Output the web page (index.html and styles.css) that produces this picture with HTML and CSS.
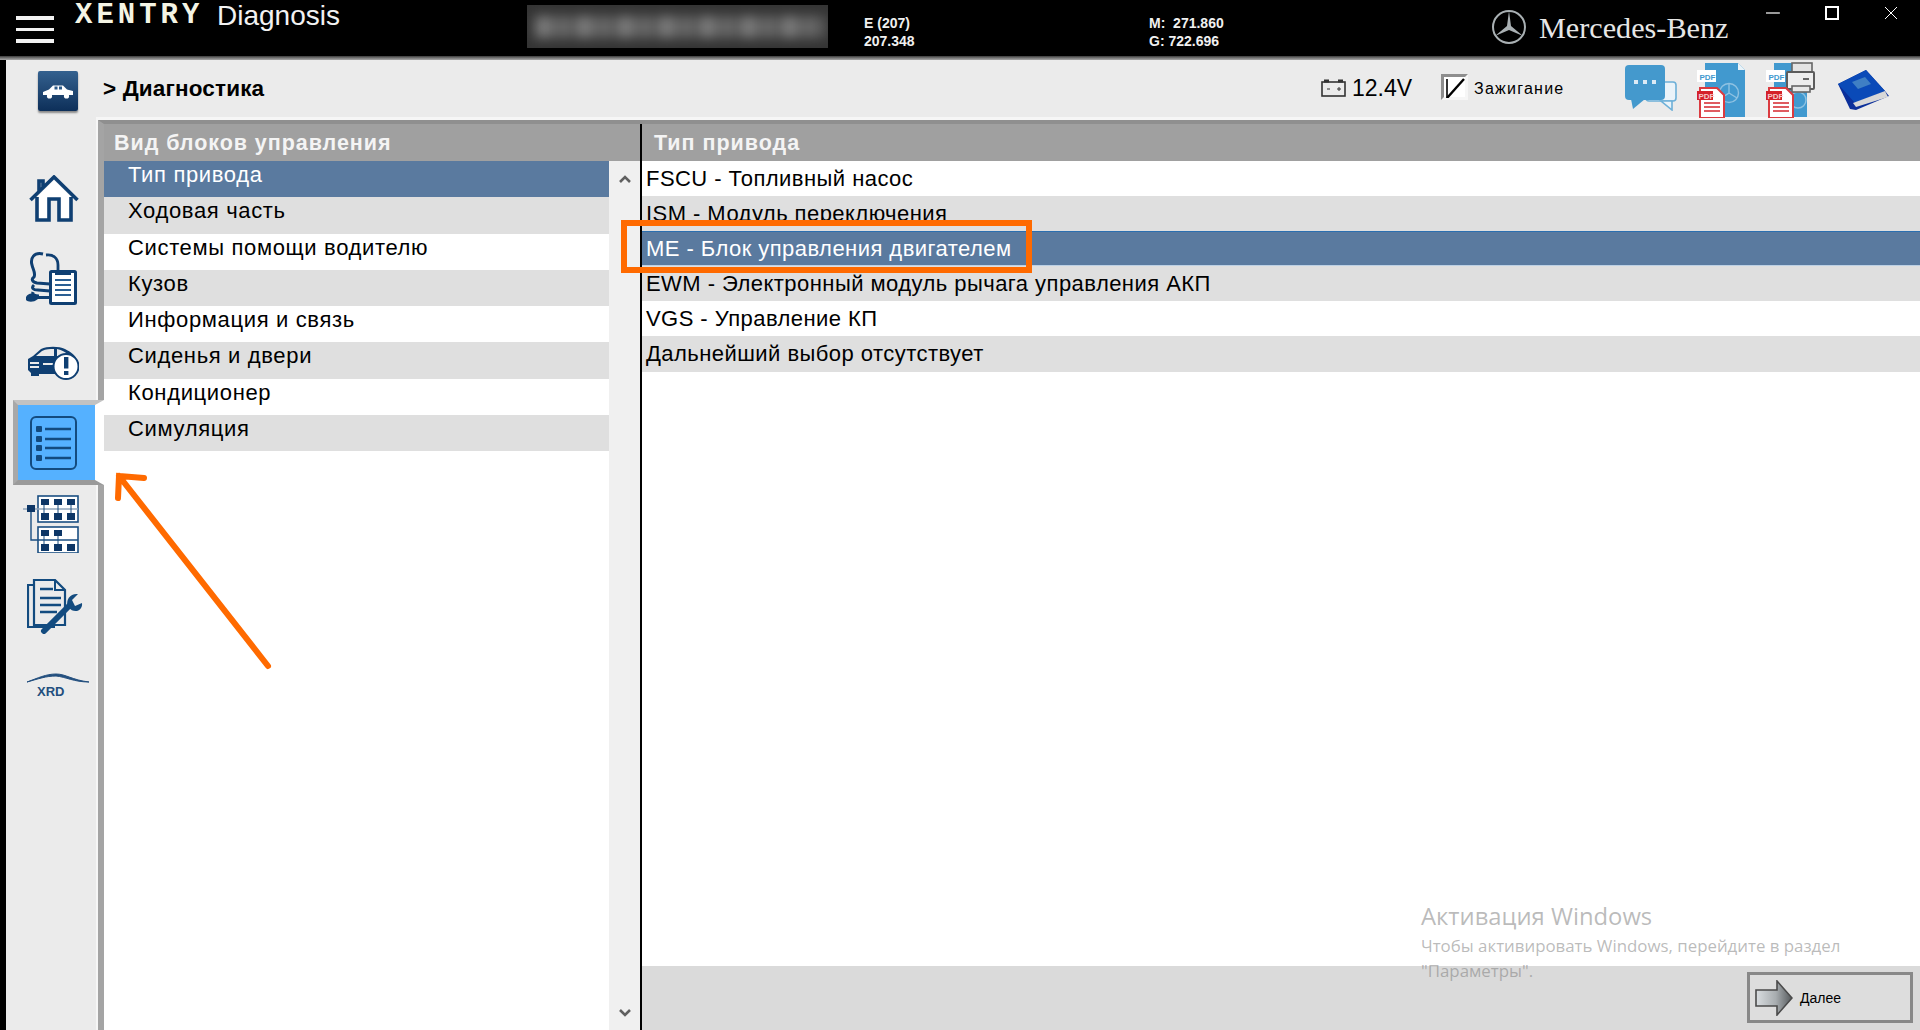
FILE: index.html
```html
<!DOCTYPE html>
<html lang="ru">
<head>
<meta charset="utf-8">
<title>XENTRY Diagnosis</title>
<link rel="stylesheet" href="styles.css">
</head>
<body>
<div class="app">
  <header class="topbar">
    <div class="burger"><i></i><i></i><i></i></div>
    <div class="xentry">XENTRY</div>
    <div class="diag">Diagnosis</div>
    <div class="vin"><div class="vin-smear"></div></div>
    <div class="info info-e">E (207)<br>207.348</div>
    <div class="info info-m">M:&nbsp; 271.860<br>G: 722.696</div>
    <svg class="star" viewBox="0 0 36 36"><circle cx="18" cy="18" r="16" fill="none" stroke="#a9b0b3" stroke-width="2"/><path d="M18 2 L20 17 L32 27 L18 21 L4 27 L16 17 Z" fill="#a9b0b3"/></svg>
    <div class="brand">Mercedes-Benz</div>
    <div class="winctl">
      <svg class="win-min" viewBox="0 0 14 14"><path d="M0 7H14" stroke="#fff" stroke-width="1.2"/></svg>
      <svg class="win-max" viewBox="0 0 14 14"><rect x="1" y="1" width="12" height="12" fill="none" stroke="#fff" stroke-width="2"/></svg>
      <svg class="win-close" viewBox="0 0 14 14"><path d="M1 1L13 13M13 1L1 13" stroke="#fff" stroke-width="1"/></svg>
    </div>
  </header>
  <div class="topline"></div>

  <div class="shell">
    <div class="surface">
      <div class="toolbar">
        <div class="carbtn">
          <svg viewBox="0 0 40 40" width="40" height="40"><path d="M5 21 L11 18.5 L15 14.5 H25 L29 18.5 L35 20 V24 H5 Z" fill="#fff"/><rect x="16.5" y="15.5" width="3" height="3" fill="#2b5a8a"/><rect x="21" y="15.5" width="3" height="3" fill="#2b5a8a"/><circle cx="11.5" cy="25" r="2.6" fill="#fff"/><circle cx="28.5" cy="25" r="2.6" fill="#fff"/></svg>
        </div>
        <div class="crumb">&gt; Диагностика</div>
        <div class="tool-right">
          <svg class="battery" viewBox="0 0 25 18"><rect x="1" y="3" width="23" height="14" fill="none" stroke="#333" stroke-width="1.6"/><rect x="3" y="0.5" width="5" height="3" fill="#333"/><rect x="17" y="0.5" width="5" height="3" fill="#333"/><path d="M6 10H9M16 10H20M18 8V12" stroke="#333"/></svg>
          <span class="volt">12.4V</span>
          <span class="check"><svg viewBox="0 0 21 21" width="21" height="21"><path d="M3 21 L20 2" stroke="#000" stroke-width="2.4"/><path d="M3 2V21" stroke="#000" stroke-width="1.6"/></svg></span>
          <span class="ign">Зажигание</span>
          <svg class="ic-chat" viewBox="0 0 52 46"><rect x="21" y="17" width="30" height="19" rx="3" fill="#eaf3f9" stroke="#6db0d8" stroke-width="1.6"/><path d="M36 36 L47 36 L47 45 Z" fill="#eaf3f9" stroke="#6db0d8" stroke-width="1.6"/><rect x="0" y="0" width="40" height="35" rx="4" fill="#4499cd"/><path d="M6 34 L8 44 L20 34 Z" fill="#4499cd"/><rect x="9" y="15" width="4" height="4" fill="#dbeaf5"/><rect x="18" y="15" width="4" height="4" fill="#dbeaf5"/><rect x="27" y="15" width="4" height="4" fill="#dbeaf5"/></svg>
          <svg class="ic-pdf" viewBox="0 0 50 56"><path d="M8 1H41L48 8V55H8Z" fill="#4199cf"/><path d="M41 1L48 8H41Z" fill="#e9f3f9"/><circle cx="32" cy="31" r="9.5" fill="none" stroke="#8fc2e2" stroke-width="1.4"/><path d="M32 21.5V31L24 36M32 31L40 36" stroke="#8fc2e2" stroke-width="1.4" fill="none"/><rect x="0" y="8" width="19" height="12" fill="#fff"/><text x="2.5" y="17.5" class="pdf-blue">PDF</text><path d="M3 26H20L27 33V56H3Z" fill="#fff" stroke="#db3b40" stroke-width="2"/><rect x="0" y="29" width="16" height="9" fill="#d4212a"/><text x="1.5" y="36.5" class="pdf-red">PDF</text><path d="M7 41H23M7 45H23M7 49H23" stroke="#df5b60" stroke-width="2.2"/></svg>
          <svg class="ic-print" viewBox="0 0 50 56"><path d="M8 1H41V55H8Z" fill="#4199cf"/><circle cx="32" cy="38" r="8" fill="none" stroke="#8fc2e2" stroke-width="1.4"/><rect x="0" y="8" width="19" height="12" fill="#fff"/><text x="2.5" y="17.5" class="pdf-blue">PDF</text><rect x="26" y="1" width="20" height="12" fill="#e4e4e4" stroke="#666" stroke-width="1.6"/><rect x="21" y="10" width="27" height="17" rx="1" fill="#eee" stroke="#5c5c5c" stroke-width="2"/><rect x="26" y="24" width="18" height="6" fill="#e8e8e8" stroke="#666" stroke-width="1.6"/><rect x="37" y="16" width="6" height="2" fill="#666"/><path d="M3 26H20L27 33V56H3Z" fill="#fff" stroke="#db3b40" stroke-width="2"/><rect x="0" y="29" width="16" height="9" fill="#d4212a"/><text x="1.5" y="36.5" class="pdf-red">PDF</text><path d="M7 41H23M7 45H23M7 49H23" stroke="#df5b60" stroke-width="2.2"/></svg>
          <svg class="ic-book" viewBox="0 0 52 42"><path d="M0 15 L28 1 L47 22 L51 27 L18 41 L12 40 Z" fill="#0b2f9a"/><path d="M0 15 L28 1 L47 22 L17 34 Z" fill="#0a4ab8"/><path d="M15 34 L47 22 L50 28 L18 38 Z" fill="#d8d8d8"/><path d="M14 13 L27 8 L33 15 L20 20 Z" fill="#3f7fc4"/></svg>
        </div>
      </div>

      <div class="main">
        <nav class="sidebar">
          <div class="nav nav-home">
            <svg width="50" height="47" viewBox="0 0 50 47"><path d="M8 22V45H20V24H30V45H42V22L25 5Z" fill="#fff"/><path d="M1.5 25 L25 2 L48.5 25 M10 16 V6 H14 V12 M8 22V45H20V24H30V45H42V22" fill="none" stroke="#0f3f72" stroke-width="3.6"/></svg>
          </div>
          <div class="nav nav-steth">
            <svg width="52" height="53" viewBox="0 0 52 53"><path d="M18 2C9 0 5 6 7 13C8 18 11 21 9 25C6 27 7 30 12 31L25 32M9 33C6 36 8 38 13 38L25 39M8 40C7 43 10 44 14 44" fill="none" stroke="#0f3f72" stroke-width="3"/><path d="M21 3C28 2 33 6 33 13V18" fill="none" stroke="#0f3f72" stroke-width="2.8"/><path d="M1 45C3 41 8 40 13 44H25V47H13C8 51 3 50 1 48Z" fill="#0f3f72"/><rect x="25.5" y="19.5" width="25" height="32" rx="1" fill="#fff" stroke="#0f3f72" stroke-width="3"/><path d="M30 22H46" stroke="#0f3f72" stroke-width="2"/><path d="M30 28H46M30 33H46M30 38H46M30 43H46" stroke="#2a5f93" stroke-width="2"/></svg>
          </div>
          <div class="nav nav-warn">
            <svg width="52" height="34" viewBox="0 0 52 34"><path d="M1 13 L6 10 L14 3 C20 0 32 0 38 3 C44 6 48 9 50 14 L30 28 H5 L1 24Z" fill="#0f3f72"/><path d="M15 5 C19 3 23 3 27 3 V10 H9Z" fill="#ebebeb"/><path d="M30 3 C35 4 39 6 42 10 H30Z" fill="#ebebeb"/><path d="M3 17 H12 M3 21 H12 M16 18 H30" stroke="#ebebeb" stroke-width="1.8"/><rect x="4" y="26" width="8" height="4" fill="#0f3f72"/><circle cx="39" cy="20.5" r="12.5" fill="#fff" stroke="#0f3f72" stroke-width="2"/><rect x="37" y="11" width="4.4" height="11.5" fill="#0f3f72"/><rect x="37" y="25" width="4.4" height="4" fill="#0f3f72"/></svg>
          </div>
          <div class="nav-tab">
            <svg width="47" height="54" viewBox="0 0 47 54"><rect x="1" y="1" width="45" height="52" rx="5" fill="none" stroke="#134b7f" stroke-width="2"/><path d="M15 13H41M15 23H41M15 32H41M15 42H41" stroke="#134b7f" stroke-width="2.4"/><rect x="6" y="10" width="6" height="6" rx="1" fill="#134b7f"/><rect x="6" y="20" width="6" height="6" rx="1" fill="#134b7f"/><rect x="6" y="29" width="6" height="6" rx="1" fill="#134b7f"/><rect x="6" y="39" width="6" height="6" rx="1" fill="#134b7f"/></svg>
          </div>
          <div class="nav nav-mod">
            <svg width="56" height="58" viewBox="0 0 56 58"><rect x="15" y="1" width="40" height="26" fill="#fff" stroke="#1b4f82" stroke-width="1.6"/><rect x="15" y="32" width="40" height="26" fill="#fff" stroke="#1b4f82" stroke-width="1.6"/><path d="M0 14H55" stroke="#8fa5ba" stroke-width="1.5"/><path d="M8 14V45H55" stroke="#1b4f82" stroke-width="1.4" fill="none"/><path d="M21 5V24M35 5V24M48 5V24M21 36V55M35 36V55" stroke="#1b4f82"/><g fill="#0d3666"><rect x="4" y="10" width="8" height="7"/><rect x="18" y="4" width="8" height="6"/><rect x="31" y="4" width="8" height="6"/><rect x="44" y="4" width="8" height="6"/><rect x="18" y="18" width="8" height="7"/><rect x="31" y="18" width="8" height="7"/><rect x="44" y="18" width="8" height="7"/><rect x="18" y="35" width="8" height="6"/><rect x="31" y="35" width="8" height="6"/><rect x="18" y="49" width="8" height="7"/><rect x="31" y="49" width="8" height="7"/><rect x="44" y="49" width="8" height="7"/></g></svg>
          </div>
          <div class="nav nav-docs">
            <svg width="60" height="55" viewBox="0 0 60 55"><path d="M6 6H1V48H28" fill="none" stroke="#134b7f" stroke-width="2.2"/><path d="M7 1H28L38 11V46H7Z" fill="#ebebeb" stroke="#134b7f" stroke-width="2.2"/><path d="M28 1V11H38" fill="none" stroke="#134b7f" stroke-width="2"/><path d="M13 10H26M13 19H34M13 26H34M13 33H30" stroke="#134b7f" stroke-width="2.4"/><path d="M17 52L43 26" stroke="#134b7f" stroke-width="6" stroke-linecap="round"/><path d="M41 28C38 20 44 14 51 15L45 21L48 27L55 24C56 31 48 36 41 28Z" fill="#134b7f"/></svg>
          </div>
          <div class="nav nav-xrd">
            <svg width="64" height="25" viewBox="0 0 64 25"><path d="M1 9C12 5 20 1 30 1C40 1 46 7 63 9C48 9 40 4 30 3C20 3 12 6 1 9Z" fill="#234f7e" stroke="#234f7e"/><text x="11" y="23" class="xrd">XRD</text></svg>
          </div>
        </nav>

        <div class="frame">
          <div class="frame-inner">
            <section class="left">
              <div class="head">Вид блоков управления</div>
              <div class="left-body">
                <ul class="list list-left">
                  <li class="sel">Тип привода</li>
                  <li>Ходовая часть</li>
                  <li>Системы помощи водителю</li>
                  <li>Кузов</li>
                  <li>Информация и связь</li>
                  <li>Сиденья и двери</li>
                  <li>Кондиционер</li>
                  <li>Симуляция</li>
                </ul>
                <div class="scroll">
                  <svg width="12" height="8" viewBox="0 0 12 8"><path d="M1 7L6 2L11 7" fill="none" stroke="#606060" stroke-width="2.6"/></svg>
                  <svg width="12" height="8" viewBox="0 0 12 8"><path d="M1 1L6 6L11 1" fill="none" stroke="#606060" stroke-width="2.6"/></svg>
                </div>
              </div>
            </section>
            <section class="right">
              <div class="head head-right">Тип привода</div>
              <ul class="list list-right">
                <li>FSCU - Топливный насос</li>
                <li>ISM - Модуль переключения</li>
                <li class="sel">ME - Блок управления двигателем</li>
                <li>EWM - Электронный модуль рычага управления АКП</li>
                <li>VGS - Управление КП</li>
                <li>Дальнейший выбор отсутствует</li>
              </ul>
              <footer class="foot">
                <button class="next" type="button">
                  <svg width="38" height="36" viewBox="0 0 38 36"><defs><linearGradient id="ng" x1="0" x2="1"><stop offset="0" stop-color="#d9dde0"/><stop offset=".55" stop-color="#a8adb0"/><stop offset="1" stop-color="#55595c"/></linearGradient></defs><path d="M1 10H22V1L37 18L22 35V26H1Z" fill="url(#ng)" stroke="#4a4a4a" stroke-width="1.6"/></svg>
                  <span>Далее</span>
                </button>
              </footer>
            </section>
          </div>
        </div>
      </div>
    </div>
  </div>

  <div class="mark">
    <div class="mark-title">Активация Windows</div>
    <div class="mark-text">Чтобы активировать Windows, перейдите в раздел<br>"Параметры".</div>
  </div>
  <div class="hl-box"></div>
  <svg class="hl-arrow" width="170" height="210" viewBox="0 0 170 210"><path d="M153 196L4 6M29 8L4 6L3 28" fill="none" stroke="#ff6a00" stroke-width="6" stroke-linecap="round"/></svg>
</div>
</body>
</html>
```

FILE: styles.css
```css
* { box-sizing: border-box; }
html, body { margin: 0; padding: 0; height: 100%; background: #000; }
body { font-family: "Liberation Sans", Arial, sans-serif; color: #000; }
.app { position: relative; width: 1920px; height: 1030px; overflow: hidden; display: flex; flex-direction: column; }

/* top bar */
.topbar { height: 56px; background: #000; color: #fff; display: flex; position: relative; flex: none; }
.burger { width: 38px; margin: 16px 0 0 16px; display: flex; flex-direction: column; gap: 8px; flex: none; }
.burger i { display: block; height: 3.5px; background: #f2f2f2; }
.xentry { font-family: "Liberation Mono", monospace; font-weight: 700; font-size: 29px; letter-spacing: 4px; margin: -1px 0 0 21px; color: #f4f4e4; line-height: 34px; width: 142px; flex: none; }
.diag { font-size: 28px; line-height: 32px; color: #f2f2f2; width: 310px; flex: none; }
.vin { width: 301px; height: 43px; margin-top: 5px; background: #343434; overflow: hidden; flex: none; }
.vin-smear { height: 22px; margin: 11px 0 0 8px; width: 290px; filter: blur(6px); background: repeating-linear-gradient(90deg, #7a7a7a 0 17px, #555 17px 23px, #6c6c6c 23px 35px, #4c4c4c 35px 41px); }
.info { font-size: 14px; font-weight: 700; line-height: 18px; color: #f0f0f0; padding-top: 14px; flex: none; }
.info-e { margin-left: 36px; width: 285px; }
.info-m { width: 342px; }
.star { width: 36px; height: 36px; margin-top: 9px; flex: none; }
.brand { font-family: "Liberation Serif", serif; font-size: 30.2px; line-height: 36px; margin: 10px 0 0 12px; color: #e6e6e6; width: 227px; flex: none; white-space: nowrap; }
.winctl { display: flex; gap: 45px; padding-top: 6px; align-items: flex-start; flex: none; }
.winctl svg { width: 14px; height: 14px; display: block; }

.topline { height: 4px; flex: none; background: linear-gradient(#3a3a3a 0, #777 50%, #a9a9a9 100%); }

/* shell */
.shell { flex: 1; padding-left: 6px; background: #000; display: flex; min-height: 0; }
.surface { flex: 1; background: #ebebeb; display: flex; flex-direction: column; min-width: 0; }

.toolbar { height: 57px; display: flex; align-items: flex-start; flex: none; }
.carbtn { width: 40px; height: 40px; margin: 11px 0 0 32px; background: linear-gradient(#34618f, #0d2f59); border-radius: 2px; box-shadow: 0 2px 2px #8a8a8a; flex: none; }
.carbtn svg { display: block; }
.crumb { font-weight: 700; font-size: 22.5px; line-height: 26px; margin: 16px 0 0 25px; letter-spacing: .15px; width: 1218px; flex: none; }
.tool-right { display: flex; flex: none; position: relative; }
.battery { width: 25px; height: 18px; margin-top: 19px; flex: none; }
.volt { font-size: 23px; line-height: 28px; margin: 14px 0 0 6px; width: 89px; flex: none; }
.check { width: 27px; height: 26px; margin-top: 14px; border: 3px solid; border-color: #8e8e8e #f6f6f6 #f6f6f6 #8e8e8e; background: #fff; flex: none; }
.check svg { display: block; }
.ign { font-size: 16px; letter-spacing: 1.25px; line-height: 20px; margin: 19px 0 0 6px; width: 151px; flex: none; }
.ic-chat { width: 52px; height: 46px; margin-top: 5px; flex: none; }
.ic-pdf { width: 50px; height: 56px; margin: 2px 0 0 20px; flex: none; }
.ic-print { width: 50px; height: 56px; margin: 2px 0 0 19px; flex: none; }
.ic-book { width: 52px; height: 42px; margin: 9px 0 0 22px; flex: none; }
.pdf-blue, .pdf-red { font-family: "Liberation Sans", sans-serif; font-weight: 700; font-size: 8px; }
.pdf-blue { fill: #4199cf; }
.pdf-red { fill: #f6c9cb; }

.main { flex: 1; display: flex; min-height: 0; }

/* sidebar */
.sidebar { width: 90px; flex: none; padding-top: 41px; display: flex; flex-direction: column; position: relative; z-index: 2; }
.nav { display: flex; justify-content: center; align-items: center; flex: none; }
.nav svg { display: block; }
.nav-home { height: 80px; margin-left: 6px; }
.nav-steth { height: 80px; }
.nav-warn { height: 82px; margin-left: 4px; padding-top: 8px; }
.nav-mod { height: 77px; }
.nav-docs { height: 88px; margin-left: 12px; }
.nav-xrd { height: 70px; margin-left: 13px; }
.nav-tab { height: 85px; width: 91px; margin-left: 7px; margin-right: -8px; border: 5px solid; border-color: #c2c2c2 #fff #9a9a9a #a8a8a8; border-right-width: 9px; background: #55b1ff; display: flex; align-items: center; justify-content: center; padding-right: 6px; flex: none; }
.nav-tab svg { display: block; }

/* frame */
.frame { flex: 1; min-width: 0; border-top: 3px solid #f6f6f6; border-left: 2px solid #f6f6f6; }
.frame-inner { height: 100%; display: flex; border-top: 4px solid #8f8f8f; border-left: 6px solid #a4a4a4; background: #fff; }
.head { height: 37px; background: #a0a0a0; color: #f4f4f4; font-weight: 700; font-size: 21.5px; line-height: 38px; padding-left: 10px; letter-spacing: .95px; flex: none; }
.head-right { padding-left: 12px; letter-spacing: 1px; }

.left { width: 538px; flex: none; display: flex; flex-direction: column; border-right: 2px solid #000; }
.left-body { flex: 1; display: flex; min-height: 0; }
.list { list-style: none; margin: 0; padding: 0; }
.list li { white-space: nowrap; overflow: hidden; font-size: 22px; }
.list-left { width: 505px; flex: none; }
.list-left li { height: 36.25px; line-height: 28px; padding-left: 24px; background: #fff; letter-spacing: .65px; }
.list-left li:nth-child(even) { background: #dfdfdf; }
.list-left li.sel, .list-right li.sel { background: #5a7a9f; color: #fff; }
.scroll { flex: 1; background: #f0f0f0; display: flex; flex-direction: column; justify-content: space-between; align-items: center; padding: 14px 0 13px; }
.scroll svg { display: block; }

.right { flex: 1; min-width: 0; display: flex; flex-direction: column; }
.list-right { flex: 1; }
.list-right li { height: 35.1px; line-height: 35px; padding-left: 4px; background: #fff; letter-spacing: .45px; }
.list-right li:nth-child(even) { background: #dfdfdf; }
.list-right li.sel { border-top: 1px solid #2b6fb0; border-bottom: 1px solid #bcd0e4; line-height: 33px; }
.foot { height: 64px; flex: none; background: #dadada; display: flex; justify-content: flex-end; align-items: flex-start; padding: 6px 7px 0 0; }
.next { width: 166px; height: 51px; border: 3px solid #888; background: #dddddd; display: flex; align-items: center; gap: 7px; padding: 0 0 0 5px; font: 14px "Liberation Sans", sans-serif; color: #000; }
.next svg { display: block; flex: none; }
.xrd { font-family: "Liberation Sans", sans-serif; font-weight: 700; font-size: 13px; fill: #234f7e; }

/* overlays */
.mark { position: absolute; left: 1421px; top: 899px; color: rgba(120, 120, 120, .5); font-family: "Open Sans", sans-serif; }
.mark-title { font-size: 23.8px; line-height: 34px; }
.mark-text { font-size: 16.85px; line-height: 25px; white-space: nowrap; }
.hl-box { position: absolute; left: 621px; top: 220px; width: 411px; height: 53px; border: 6px solid #ff6a00; }
.hl-arrow { position: absolute; left: 115px; top: 470px; }
```
